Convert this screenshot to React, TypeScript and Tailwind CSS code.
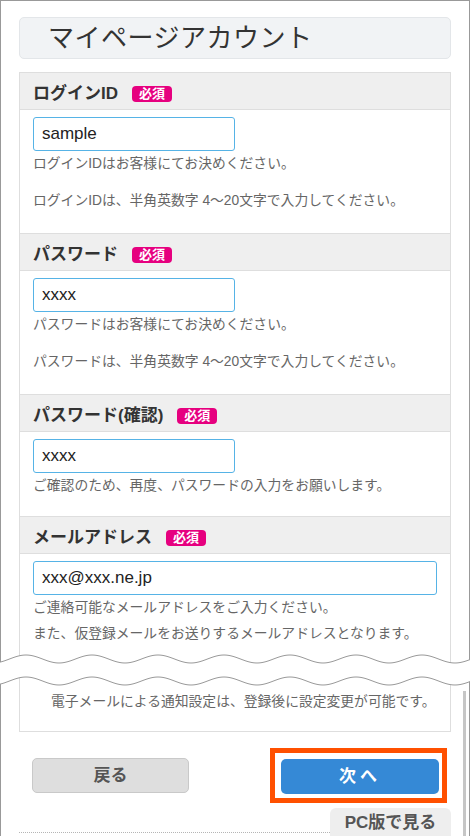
const FONT = "font-['Liberation_Sans','Noto_Sans_CJK_JP',sans-serif]";

type Field = {
  label: string;
  value: string;
  wide?: boolean;
  notes: string[];
  noteGap: string;
  pb: string;
};

const fields: Field[] = [
  {
    label: "ログインID",
    value: "sample",
    notes: ["ログインIDはお客様にてお決めください。", "ログインIDは、半角英数字 4〜20文字で入力してください。"],
    noteGap: "mt-[19px]",
    pb: "pb-[23px]",
  },
  {
    label: "パスワード",
    value: "xxxx",
    notes: ["パスワードはお客様にてお決めください。", "パスワードは、半角英数字 4〜20文字で入力してください。"],
    noteGap: "mt-[19px]",
    pb: "pb-[23px]",
  },
  {
    label: "パスワード(確認)",
    value: "xxxx",
    notes: ["ご確認のため、再度、パスワードの入力をお願いします。"],
    noteGap: "mt-[19px]",
    pb: "pb-[21px]",
  },
  {
    label: "メールアドレス",
    value: "xxx@xxx.ne.jp",
    wide: true,
    notes: ["ご連絡可能なメールアドレスをご入力ください。", "また、仮登録メールをお送りするメールアドレスとなります。"],
    noteGap: "mt-[8px]",
    pb: "pb-[2px]",
  },
];

function Section({ f }: { f: Field }) {
  return (
    <div>
      <div className="h-[37px] bg-[#efefef] border-b border-[#dedede] flex items-center gap-[14px] px-[13px] pt-[5px]">
        <span className="text-[17px] font-bold text-[#333]">{f.label}</span>
        <span className="h-[16px] px-[7px] rounded-[4px] bg-[#e6007f] text-white text-[13px] font-bold leading-[16px]">
          必須
        </span>
      </div>
      <div className={`px-[13px] pt-[7px] ${f.pb}`}>
        <input
          readOnly
          defaultValue={f.value}
          className={`${f.wide ? "w-[404px]" : "w-[202px]"} h-[34px] block border border-[#56b3e6] rounded-[3px] px-[8px] text-[17px] text-[#222] outline-none bg-white`}
        />
        {f.notes.map((n, i) => (
          <p key={n} className={`text-[13.8px] leading-[18px] text-[#666] ${i === 0 ? "mt-[4px]" : f.noteGap}`}>
            {n}
          </p>
        ))}
      </div>
    </div>
  );
}

function waveY(c: number, x: number) {
  return c - 4 * Math.cos((2 * Math.PI * (x - 26)) / 66);
}

function Tear() {
  const path = (c: number) => {
    const pts: string[] = [];
    for (let x = 0; x <= 470; x += 2) pts.push(`${x},${waveY(c, x).toFixed(2)}`);
    return "M" + pts.join(" L");
  };
  const lines = [
    { x: 0.5, color: "#999" },
    { x: 19.5, color: "#ddd" },
    { x: 450.5, color: "#ddd" },
    { x: 469.5, color: "#999" },
  ];
  return (
    <svg width="470" height="46" className="block">
      {lines.map((l) => (
        <g key={l.x} stroke={l.color} strokeWidth="1">
          <line x1={l.x} y1={0} x2={l.x} y2={waveY(14, l.x)} />
          <line x1={l.x} y1={waveY(36, l.x)} x2={l.x} y2={46} />
        </g>
      ))}
      <path d={path(14)} fill="none" stroke="#999" strokeWidth="1" />
      <path d={path(36)} fill="none" stroke="#999" strokeWidth="1" />
    </svg>
  );
}

export default function App() {
  return (
    <div className={`w-[470px] bg-white ${FONT}`}>
      {/* top half */}
      <div className="border-x border-t border-[#999] px-[18px] pt-[16px]">
        <div className="h-[42px] border border-[#e3e6e9] bg-[#f1f3f5] rounded-[5px] flex items-center pl-[28px]">
          <h1 className="text-[26px] text-[#333] leading-none tracking-[0.5px]">マイページアカウント</h1>
        </div>
        <div className="mt-[13px] border-x border-t border-[#dedede] divide-y divide-[#dedede]">
          {fields.map((f) => (
            <Section key={f.label} f={f} />
          ))}
        </div>
      </div>

      <Tear />

      {/* bottom half */}
      <div className="relative border-x border-b border-[#999] px-[18px]">
        <div className="absolute right-[3px] top-0 bottom-0 w-[3px] bg-[#c6c6c6]" />
        <div className="border-x border-b border-[#dedede] pt-[2px] pb-[20px]">
          <p className="pl-[31px] text-[13.8px] leading-[18px] text-[#666]">
            電子メールによる通知設定は、登録後に設定変更が可能です。
          </p>
        </div>

        <div className="flex items-center justify-between pt-[16px] pl-[13px] pr-[4px]">
          <button className="w-[157px] h-[35px] rounded-[5px] bg-[#dedede] border border-[#c9c9c9] text-[17px] font-bold text-[#555]">
            戻る
          </button>
          <div className="border-[5px] border-[#ff5000] pl-[6px] pr-[3px] pt-[6px] pb-[4px] bg-white">
            <button className="w-[158px] h-[35px] rounded-[5px] bg-[#3589d6] text-[17px] font-bold text-white tracking-[4px]">
              次へ
            </button>
          </div>
        </div>

        <div className="flex mt-[5px]">
          <div className="flex-1 self-end mb-[4px] border-b border-dotted border-[#b5b5b5]" />
          <div className="w-[121px] h-[29px] bg-[#eeeeee] rounded-t-[6px] flex items-center justify-center text-[17px] font-bold text-[#555]">
            PC版で見る
          </div>
        </div>
      </div>
    </div>
  );
}
